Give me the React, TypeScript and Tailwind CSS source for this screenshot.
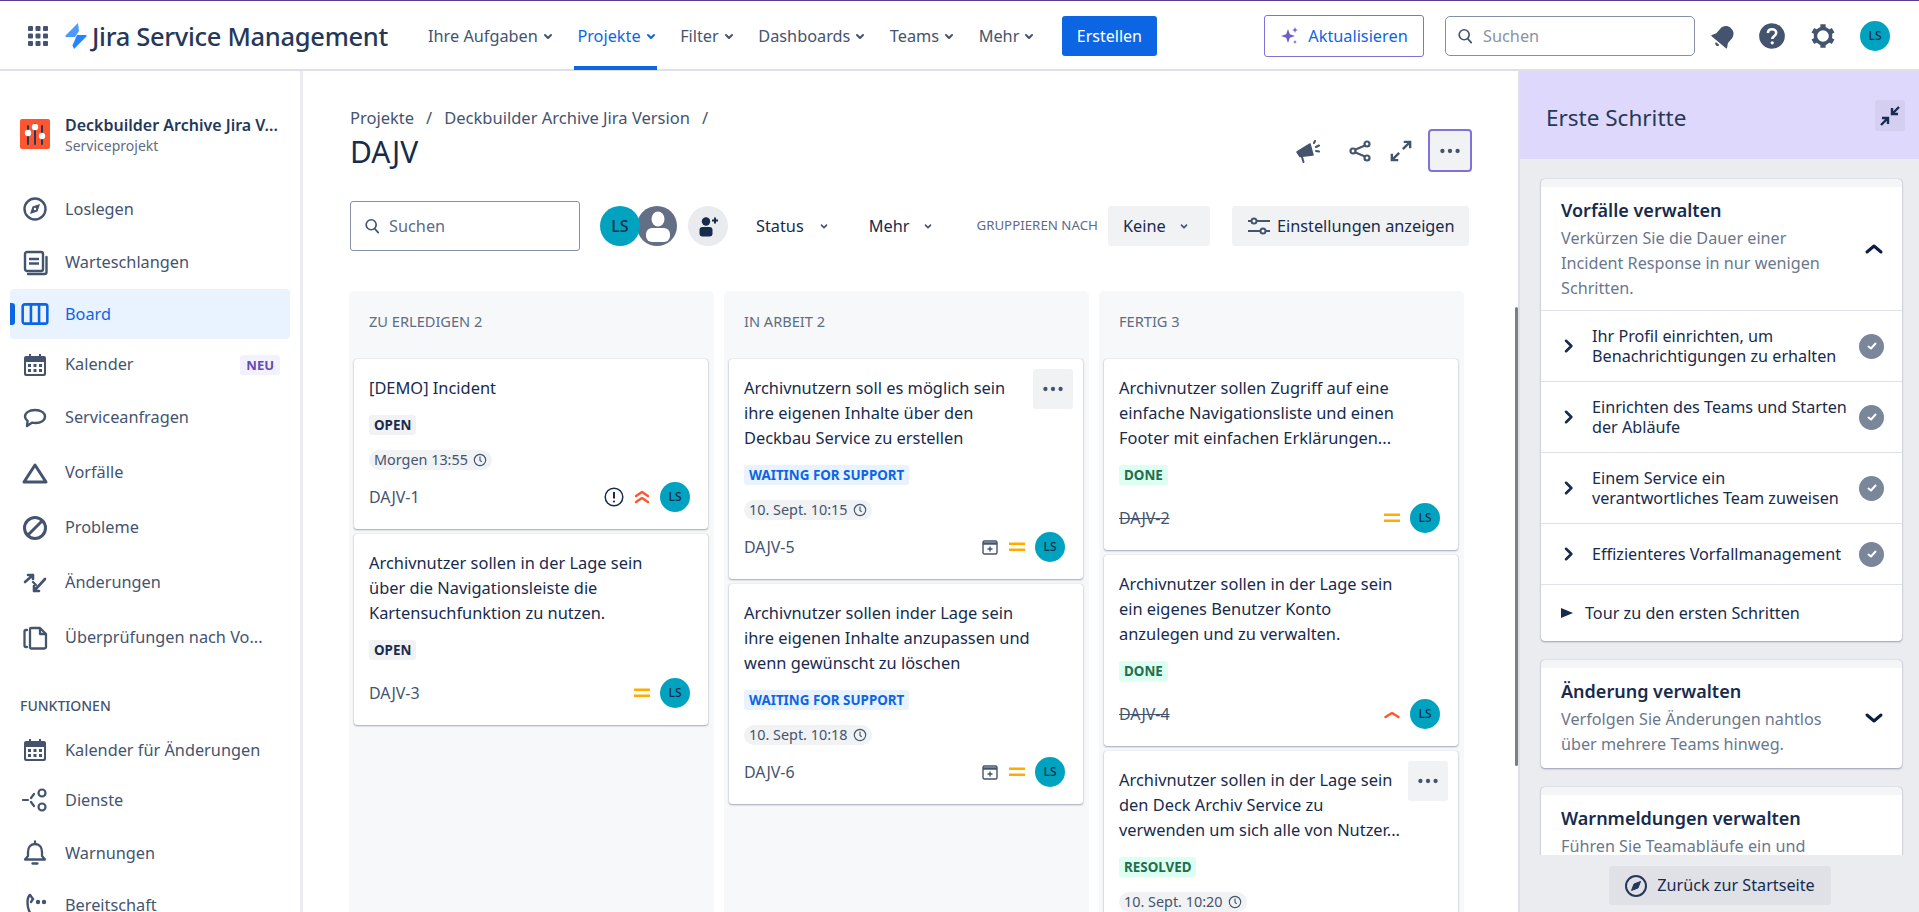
import type { ReactNode } from "react";

const FONT = "[font-family:'Noto_Sans','Open_Sans',sans-serif]";

type IconProps = { className?: string };

function ChevronDown({ className = "w-5 h-5" }: IconProps) {
  return (
    <svg viewBox="0 0 24 24" className={className} fill="currentColor">
      <path d="M8.292 10.293a1.009 1.009 0 000 1.419l2.939 2.965c.218.215.5.322.779.322s.556-.107.769-.322l2.93-2.955a1.01 1.01 0 000-1.419.987.987 0 00-1.406 0l-2.298 2.317-2.307-2.327a.99.99 0 00-1.406 0z" />
    </svg>
  );
}

function Dots({ className = "w-6 h-6" }: IconProps) {
  return (
    <svg viewBox="0 0 24 24" className={className} fill="currentColor">
      <circle cx="5" cy="12" r="2" />
      <circle cx="12" cy="12" r="2" />
      <circle cx="19" cy="12" r="2" />
    </svg>
  );
}

function SearchIcon({ className = "w-5 h-5" }: IconProps) {
  return (
    <svg viewBox="0 0 24 24" className={className} fill="none" stroke="currentColor" strokeWidth="2">
      <circle cx="11" cy="10.5" r="6" />
      <path d="M15.5 15.5l4 4.5" strokeLinecap="round" />
    </svg>
  );
}

function Calendar({ className = "w-7 h-7" }: IconProps) {
  return (
    <svg viewBox="0 0 28 28" className={className} fill="currentColor">
      <path d="M5 5h3V3h2v2h8V3h2v2h3a2 2 0 012 2v16a2 2 0 01-2 2H5a2 2 0 01-2-2V7a2 2 0 012-2zm0 6v11a1 1 0 001 1h16a1 1 0 001-1V11H5z" fillRule="evenodd" />
      <rect x="7" y="13" width="3" height="3" />
      <rect x="12.5" y="13" width="3" height="3" />
      <rect x="18" y="13" width="3" height="3" />
      <rect x="7" y="18" width="3" height="3" />
      <rect x="12.5" y="18" width="3" height="3" />
      <rect x="18" y="18" width="3" height="3" />
    </svg>
  );
}

const navIcons: Record<string, ReactNode> = {
  compass: (
    <svg viewBox="0 0 28 28" className="w-7 h-7" fill="none" stroke="currentColor" strokeWidth="2.4">
      <circle cx="14" cy="14" r="10.5" />
      <path d="M19 9l-2.5 7.5L9 19l2.500-7.500z" fill="currentColor" stroke="none" />
      <circle cx="14" cy="14" r="1.2" fill="white" stroke="none" />
    </svg>
  ),
  queues: (
    <svg viewBox="0 0 28 28" className="w-7 h-7" fill="none" stroke="currentColor" strokeWidth="2.4">
      <rect x="4" y="3" width="18" height="19" rx="2" />
      <path d="M8 10h10M8 14.500h10" />
      <path d="M25.500 8v15a2 2 0 01-2 2H7" strokeLinecap="round" />
    </svg>
  ),
  board: (
    <svg viewBox="0 0 28 28" className="w-[30px] h-[30px]" fill="none" stroke="currentColor" strokeWidth="2.4">
      <rect x="2.5" y="5" width="23" height="18" rx="2" />
      <path d="M10.2 5v18M17.8 5v18" />
    </svg>
  ),
  calendar: <Calendar />,
  chat: (
    <svg viewBox="0 0 28 28" className="w-7 h-7" fill="none" stroke="currentColor" strokeWidth="2.4" strokeLinejoin="round">
      <path d="M14 6c6 0 10 2.800 10 6.600 0 3.800-4 6.400-9.500 6.400-1.200 0-2.300-.1-3.300-.4L6 22l.6-5C4.900 15.800 4 14.300 4 12.600 4 8.800 8 6 14 6z" />
    </svg>
  ),
  triangle: (
    <svg viewBox="0 0 28 28" className="w-7 h-7" fill="none" stroke="currentColor" strokeWidth="3" strokeLinejoin="round">
      <path d="M14 6L25 23H3z" />
    </svg>
  ),
  ban: (
    <svg viewBox="0 0 28 28" className="w-7 h-7" fill="none" stroke="currentColor" strokeWidth="3">
      <circle cx="14" cy="14" r="10.5" />
      <path d="M7 21L21 7" />
    </svg>
  ),
  changes: (
    <svg viewBox="0 0 28 28" className="w-7 h-7" fill="none" stroke="currentColor" strokeWidth="2.6" strokeLinecap="round" strokeLinejoin="round">
      <path d="M4 13l8-7M12 6H7M12 6v4" />
      <path d="M24 10L13 22M13 22h5M13 22v-5" />
      <path d="M12 13l3 3" strokeWidth="2.2" />
    </svg>
  ),
  pages: (
    <svg viewBox="0 0 28 28" className="w-7 h-7" fill="none" stroke="currentColor" strokeWidth="2.3" strokeLinejoin="round">
      <path d="M10 4h9l6 6v13a1.500 1.500 0 01-1.500 1.500h-13A1.500 1.500 0 019 23V5a1 1 0 011-1z" />
      <path d="M19 4v6h6" />
      <path d="M6 6H5a1.500 1.500 0 00-1.500 1.500v14A1.500 1.500 0 005 23h1" strokeLinecap="round" />
    </svg>
  ),
  services: (
    <svg viewBox="0 0 28 28" className="w-7 h-7" fill="none" stroke="currentColor" strokeWidth="2.2" strokeLinecap="round">
      <circle cx="21" cy="7" r="3.5" />
      <circle cx="21" cy="21" r="3.5" />
      <path d="M2 14h5M10 12l3-4M10 16l3 4" />
    </svg>
  ),
  bell: (
    <svg viewBox="0 0 28 28" className="w-7 h-7" fill="none" stroke="currentColor" strokeWidth="2.3" strokeLinejoin="round" strokeLinecap="round">
      <path d="M14 5c4.500 0 7 3.500 7 8v4l3 3.500H4L7 17v-4c0-4.500 2.500-8 7-8z" />
      <path d="M14 2.500V5M11.500 24.500h5" />
    </svg>
  ),
  phone: (
    <svg viewBox="0 0 28 28" className="w-7 h-7" fill="none" stroke="currentColor" strokeWidth="2.4" strokeLinecap="round">
      <path d="M9 4C6 6 6 13 7.500 18c1 3.500 3 6 5.500 6" />
      <path d="M9 4l3 4-2 3" />
      <circle cx="17" cy="11" r="1" fill="currentColor" />
      <circle cx="23" cy="11" r="1" fill="currentColor" />
    </svg>
  ),
};

function Avatar() {
  return (
    <span className="flex h-[30px] w-[30px] shrink-0 items-center justify-center rounded-full bg-[#00a3bf] text-xs font-medium text-[#172b4d]">
      LS
    </span>
  );
}

function NavLink({ label, active = false }: { label: string; active?: boolean }) {
  return (
    <div className={`relative flex h-full items-center text-[16.3px] ${active ? "text-[#0c66e4]" : "text-[#44546f]"}`}>
      <span>{label}</span>
      <ChevronDown className="-ml-0.5 h-6 w-6" />
      {active && <div className="absolute bottom-[-1px] left-[-3px] right-[6px] h-[4px] bg-[#0c66e4]" />}
    </div>
  );
}

function TopBar() {
  return (
    <header className="flex h-[71px] shrink-0 items-center border-t border-t-[#5e3b8c] border-b-2 border-b-[#dfe1e6] bg-white pl-[28px] pr-[29px] pt-[2px]">
      <svg viewBox="0 0 20 20" className="h-5 w-5 text-[#44546f]" fill="currentColor">
        {[0, 7.5, 15].map((y) =>
          [0, 7.5, 15].map((x) => <rect key={`${x}-${y}`} x={x} y={y} width="5" height="5" rx="1" />),
        )}
      </svg>
      <svg viewBox="0 0 22 26" className="ml-[17px] h-[26px] w-[22px]">
        <path d="M13 0L.6 12.400c-.5.600-.2 1.600.7 1.600H10l4-6z" fill="#4c9aff" />
        <path d="M12 12h8.700c.9 0 1.200 1 .7 1.600L9 26l-1.500-3.500z" fill="#2684ff" />
      </svg>
      <span className="ml-[5px] whitespace-nowrap text-[25.5px] font-medium tracking-[-0.3px] text-[#253858]">Jira Service Management</span>
      <nav className="ml-[40px] flex h-full items-center gap-[17.5px]">
        <NavLink label="Ihre Aufgaben" />
        <NavLink label="Projekte" active />
        <NavLink label="Filter" />
        <NavLink label="Dashboards" />
        <NavLink label="Teams" />
        <NavLink label="Mehr" />
      </nav>
      <button className="ml-[20.5px] h-10 w-[95px] rounded-[3px] bg-[#0c66e4] text-base text-white">Erstellen</button>
      <button className="ml-auto flex h-[42px] w-[160px] items-center justify-center gap-2 rounded-[3px] border border-[#8270db] text-[16.3px] text-[#0c66e4]">
        <svg viewBox="0 0 20 20" className="h-5 w-5" fill="#6e5dc6">
          <path d="M8 3l1.800 5.200L15 10l-5.200 1.800L8 17l-1.800-5.200L1 10l5.200-1.800zM15 1l.8 2.200L18 4l-2.200.8L15 7l-.8-2.200L12 4l2.200-.8zM15 14l.6 1.400 1.400.6-1.400.6L15 18l-.6-1.400-1.400-.6 1.400-.6z" />
        </svg>
        Aktualisieren
      </button>
      <div className="ml-[21px] flex h-10 w-[250px] items-center rounded-[5px] border border-[#8590a2] pl-[9px]">
        <SearchIcon className="h-5 w-5 text-[#44546f]" />
        <span className="ml-[8px] text-[16.3px] text-[#8993a4]">Suchen</span>
      </div>
      <svg viewBox="0 0 24 24" className="ml-[15px] h-7 w-7 text-[#44546f]" fill="currentColor">
        <g transform="rotate(40 12 12)">
          <path d="M12 3c-3.800 0-6.500 2.800-6.500 6.500v5L3.500 18c-.3.500 0 1 .5 1h16c.5 0 .8-.5.5-1l-2-3.500v-5C18.500 5.800 15.800 3 12 3z" />
          <path d="M10 20.500a2 2 0 004 0z" />
        </g>
      </svg>
      <svg viewBox="0 0 24 24" className="ml-[20px] h-[28px] w-[28px] text-[#44546f]">
        <circle cx="12" cy="12" r="11" fill="currentColor" />
        <path d="M8.500 9.500C8.500 7.500 10 6.200 12 6.200s3.600 1.300 3.600 3.100c0 3-3.400 2.700-3.400 5.200" fill="none" stroke="white" strokeWidth="2.2" />
        <circle cx="12.200" cy="17.800" r="1.400" fill="white" />
      </svg>
      <svg viewBox="0 0 24 24" className="ml-[23px] h-7 w-7 text-[#44546f]" fill="none" stroke="currentColor" strokeWidth="3">
        <circle cx="12" cy="12" r="6.5" />
        <path d="M12 2v3.500M12 18.500V22M3.300 7l3 1.750M17.700 15.250l3 1.750M3.300 17l3-1.750M17.700 8.750l3-1.750" strokeWidth="4.500" />
      </svg>
      <div className="ml-[23px]"><Avatar /></div>
    </header>
  );
}

function SideItem({ icon, label, height, active = false, badge }: { icon: ReactNode; label: string; height: string; active?: boolean; badge?: string }) {
  return (
    <div className={`relative flex shrink-0 items-center rounded-[4px] pl-[10px] pr-[10px] ${height} ${active ? "bg-[#e9f2ff] text-[#0c66e4]" : "text-[#44546f]"}`}>
      {active && <div className="absolute left-0 top-[14px] h-[22px] w-[5px] rounded-r-[3px] bg-[#0c66e4]" />}
      <span className="flex w-[30px] justify-center">{icon}</span>
      <span className="ml-[15px] whitespace-nowrap text-[16.3px]">{label}</span>
      {badge && <span className="ml-auto rounded-[3px] bg-[#f3f0ff] px-[6px] text-[13px] font-bold leading-[20px] text-[#5e4db2]">{badge}</span>}
    </div>
  );
}

function Sidebar() {
  return (
    <aside className="flex h-full w-[303px] shrink-0 flex-col overflow-hidden border-r-[3px] border-r-[#ebecf0] bg-white pl-[10px] pr-[10px]">
      <div className="mt-[42px] flex shrink-0 items-center pl-[10px]">
        <svg viewBox="0 0 30 30" className="h-[30px] w-[30px] shrink-0">
          <rect width="30" height="30" rx="2" fill="#ff5630" />
          <path d="M8 7v18M15 5v20M22 7v18" stroke="#253858" strokeWidth="2" strokeLinecap="round" />
          <circle cx="8" cy="14" r="3.2" fill="white" />
          <circle cx="15" cy="8" r="3.2" fill="white" />
          <circle cx="22" cy="17" r="3.2" fill="white" />
        </svg>
        <div className="ml-[15px] flex min-w-0 flex-col">
          <span className="whitespace-nowrap text-base font-semibold leading-[24px] text-[#253858]">Deckbuilder Archive Jira V...</span>
          <span className="text-sm leading-[18px] text-[#5e6c84]">Serviceprojekt</span>
        </div>
      </div>
      <div className="mt-[27px] flex shrink-0 flex-col">
        <SideItem icon={navIcons.compass} label="Loslegen" height="h-[54px]" />
        <SideItem icon={navIcons.queues} label="Warteschlangen" height="h-[53px]" />
        <SideItem icon={navIcons.board} label="Board" height="h-[50px]" active />
        <SideItem icon={navIcons.calendar} label="Kalender" height="h-[51px]" badge="NEU" />
        <SideItem icon={navIcons.chat} label="Serviceanfragen" height="h-[55px]" />
        <SideItem icon={navIcons.triangle} label="Vorfälle" height="h-[55px]" />
        <SideItem icon={navIcons.ban} label="Probleme" height="h-[55px]" />
        <SideItem icon={navIcons.changes} label="Änderungen" height="h-[55px]" />
        <SideItem icon={navIcons.pages} label="Überprüfungen nach Vo..." height="h-[55px]" />
      </div>
      <div className="mt-[31px] shrink-0 pl-[10px] text-sm font-medium leading-[20px] text-[#44546f]">FUNKTIONEN</div>
      <div className="mt-[8px] flex shrink-0 flex-col">
        <SideItem icon={navIcons.calendar} label="Kalender für Änderungen" height="h-[52px]" />
        <SideItem icon={navIcons.services} label="Dienste" height="h-[48px]" />
        <SideItem icon={navIcons.bell} label="Warnungen" height="h-[58px]" />
        <SideItem icon={navIcons.phone} label="Bereitschaft" height="h-[46px]" />
      </div>
    </aside>
  );
}

const lozengeColors = {
  gray: "bg-[#f1f2f4] text-[#172b4d]",
  blue: "bg-[#e9f2ff] text-[#0c66e4]",
  green: "bg-[#dcfff1] text-[#216e4e]",
};

type Priority = "highest" | "medium" | "high";

function PriorityIcon({ level }: { level: Priority }) {
  if (level === "medium") {
    return (
      <svg viewBox="0 0 16 16" className="h-4 w-4" fill="#ffab00">
        <rect x="0" y="3.5" width="16" height="2.5" />
        <rect x="0" y="9.5" width="16" height="2.5" />
      </svg>
    );
  }
  return (
    <svg viewBox="0 0 16 16" className="h-4 w-4" fill="none" stroke="#ff5630" strokeWidth="2.4" strokeLinecap="round" strokeLinejoin="round">
      {level === "highest" && <path d="M2 7l6-4 6 4" />}
      <path d={level === "highest" ? "M2 13l6-4 6 4" : "M1.500 11l6.500-4 6.500 4"} />
    </svg>
  );
}

function ClockIcon() {
  return (
    <svg viewBox="0 0 16 16" className="h-[14px] w-[14px]" fill="none" stroke="#44546f" strokeWidth="1.3">
      <circle cx="8" cy="8" r="6.5" />
      <path d="M8 4v4.500l2 1.500" />
    </svg>
  );
}

type CardProps = {
  lines: string[];
  status: string;
  tone: keyof typeof lozengeColors;
  date?: string;
  id: string;
  done?: boolean;
  priority: Priority;
  extra?: "alert" | "add";
  more?: boolean;
};

function Card({ lines, status, tone, date, id, done = false, priority, extra, more = false }: CardProps) {
  return (
    <div className="relative shrink-0 rounded-[3px] bg-white px-[15px] pt-[16px] pb-[17px] shadow-[0_1px_2px_rgba(9,30,66,0.35),0_0_1px_rgba(9,30,66,0.3)]">
      {more && (
        <div className="absolute right-[10px] top-[10px] flex h-10 w-10 items-center justify-center rounded-[3px] bg-[#f1f2f4] text-[#44546f]">
          <Dots className="h-[26px] w-[26px]" />
        </div>
      )}
      <div className="text-[16.4px] leading-[25px] text-[#172b4d]">
        {lines.map((line) => (
          <div key={line} className="whitespace-nowrap">{line}</div>
        ))}
      </div>
      <div className="mt-[15px] flex">
        <span className={`rounded-[3px] px-[5px] text-[13.4px] font-bold leading-[20px] ${lozengeColors[tone]}`}>{status}</span>
      </div>
      {date && (
        <div className="mt-[15px] flex">
          <span className="flex h-5 items-center gap-[5px] rounded-full bg-[#f1f2f4] px-[5px] text-[14.4px] text-[#44546f]">
            {date}
            <ClockIcon />
          </span>
        </div>
      )}
      <div className={`flex h-[30px] items-center pr-[3px] ${date ? "mt-[12px]" : "mt-[18px]"}`}>
        <span className={`text-base text-[#44546f] ${done ? "line-through" : ""}`}>{id}</span>
        <div className="ml-auto flex items-center gap-[10px]">
          {extra === "alert" && (
            <svg viewBox="0 0 20 20" className="h-5 w-5" fill="none" stroke="#172b4d" strokeWidth="1.5">
              <circle cx="10" cy="10" r="8.8" />
              <path d="M10 5v6.500" strokeWidth="2" />
              <circle cx="10" cy="14.500" r="1.1" fill="#172b4d" stroke="none" />
            </svg>
          )}
          {extra === "add" && (
            <svg viewBox="0 0 16 16" className="mr-[1px] h-4 w-4" fill="none" stroke="#44546f" strokeWidth="1.4">
              <rect x="1" y="2" width="14" height="13" rx="1.5" />
              <path d="M1 4.500h14" strokeWidth="2.5" />
              <path d="M8 7.500v5M5.500 10h5" />
            </svg>
          )}
          <PriorityIcon level={priority} />
          <Avatar />
        </div>
      </div>
    </div>
  );
}

function Column({ title, children }: { title: string; children: ReactNode }) {
  return (
    <div className="flex h-[800px] w-[365px] shrink-0 flex-col overflow-hidden rounded-t-[5px] bg-[#f7f8f9] pl-[5px] pr-[6px]">
      <div className="flex h-[68px] shrink-0 items-center pl-[15px] pb-[7px] text-[14.6px] text-[#5e6c84]">{title}</div>
      <div className="flex flex-col gap-[5px]">{children}</div>
    </div>
  );
}

function MainArea() {
  return (
    <main className="relative flex h-full min-w-0 flex-1 flex-col overflow-hidden bg-white pl-[47px]">
      <div className="mt-[35px] flex h-[24px] shrink-0 items-center text-[16.5px] text-[#44546f]">
        <span>Projekte</span>
        <span className="mx-[12px]">/</span>
        <span>Deckbuilder Archive Jira Version</span>
        <span className="ml-[12px]">/</span>
      </div>
      <div className="flex h-[44px] shrink-0 items-center pr-[46px]">
        <h1 className="text-[30px] leading-[40px] text-[#172b4d]">DAJV</h1>
        <div className="ml-auto -mt-[3px] flex items-center text-[#44546f]">
          <svg viewBox="0 0 26 24" className="h-[24px] w-[26px]" fill="#44546f" stroke="#44546f" strokeLinecap="round">
            <path d="M2 13L15 5l3 11-13 1.500z" strokeWidth="1.5" strokeLinejoin="round" />
            <path d="M7 18l1.500 5M19 4l1-2M21 8l3-1.500M21 12l3 .5" strokeWidth="2" />
          </svg>
          <svg viewBox="0 0 24 24" className="ml-[27px] h-6 w-6" fill="none" stroke="#44546f" strokeWidth="2.2">
            <circle cx="19" cy="5" r="2.5" />
            <circle cx="5" cy="12" r="2.5" />
            <circle cx="19" cy="19" r="2.5" />
            <path d="M7.500 10.500l9.500-4M7.500 13.500l9.500 4" />
          </svg>
          <svg viewBox="0 0 24 24" className="ml-[18px] h-[22px] w-[22px]" fill="none" stroke="#44546f" strokeWidth="2.6">
            <path d="M14 10l8-8M15 2h7v7M10 14l-8 8M2 15v7h7" />
          </svg>
          <div className="ml-[16px] flex h-[43px] w-[44px] items-center justify-center rounded-[4px] border-2 border-[#8270db] bg-[#f1f2f4]">
            <Dots className="h-[26px] w-[26px]" />
          </div>
        </div>
      </div>
      <div className="mt-[27px] flex h-[50px] shrink-0 items-center text-[16.3px] text-[#172b4d]">
        <div className="flex h-[50px] w-[230px] shrink-0 items-center rounded-[3px] border border-[#8590a2] pl-[11px]">
          <SearchIcon className="h-5 w-5 text-[#44546f]" />
          <span className="ml-[7px] text-[#5e6c84]">Suchen</span>
        </div>
        <div className="ml-[20px] flex w-[77px] shrink-0">
          <span className="z-10 flex h-10 w-10 shrink-0 items-center justify-center rounded-full bg-[#00a3bf] text-base font-medium text-[#172b4d]">LS</span>
          <span className="-ml-[3px] flex h-10 w-10 shrink-0 items-center justify-center overflow-hidden rounded-full bg-[#626f86]">
            <svg viewBox="0 0 40 40" className="h-10 w-10" fill="white">
              <ellipse cx="21" cy="13" rx="6.5" ry="7.5" />
              <rect x="9" y="22" width="24" height="14" rx="6" />
            </svg>
          </span>
        </div>
        <span className="ml-[11px] flex h-10 w-10 shrink-0 items-center justify-center rounded-full bg-[#e9ebee]">
          <svg viewBox="0 0 24 24" className="h-6 w-6" fill="#172b4d">
            <circle cx="10" cy="7.5" r="4.2" />
            <rect x="3.500" y="13" width="13" height="9.500" rx="3" />
            <path d="M19 3.500v6M16 6.500h6" stroke="#172b4d" strokeWidth="2" />
          </svg>
        </span>
        <span className="ml-[28px]">Status</span>
        <ChevronDown className="ml-[10px] h-5 w-5 shrink-0 text-[#44546f]" />
        <span className="ml-[35px]">Mehr</span>
        <ChevronDown className="ml-[9px] h-5 w-5 shrink-0 text-[#44546f]" />
        <span className="ml-[38px] whitespace-nowrap text-[13.3px] text-[#5e6c84]">GRUPPIEREN NACH</span>
        <div className="ml-[10px] flex h-10 w-[102px] shrink-0 items-center rounded-[3px] bg-[#f1f2f4] pl-[15px]">
          Keine
          <ChevronDown className="ml-[8px] h-5 w-5 text-[#44546f]" />
        </div>
        <div className="ml-[22px] flex h-10 w-[237px] shrink-0 items-center rounded-[3px] bg-[#f1f2f4] pl-[14px]">
          <svg viewBox="0 0 24 24" className="h-6 w-6" fill="none" stroke="#44546f" strokeWidth="2">
            <path d="M2 7h22M2 17h22" />
            <circle cx="8" cy="7" r="2.5" fill="white" />
            <circle cx="17" cy="17" r="2.5" fill="white" />
          </svg>
          <span className="ml-[7px] whitespace-nowrap">Einstellungen anzeigen</span>
        </div>
      </div>
      <div className="mt-[40px] -ml-[1px] flex shrink-0 gap-[10px]">
        <Column title="ZU ERLEDIGEN 2">
          <Card lines={["[DEMO] Incident"]} status="OPEN" tone="gray" date="Morgen 13:55" id="DAJV-1" priority="highest" extra="alert" />
          <Card lines={["Archivnutzer sollen in der Lage sein", "über die Navigationsleiste die", "Kartensuchfunktion zu nutzen."]} status="OPEN" tone="gray" id="DAJV-3" priority="medium" />
        </Column>
        <Column title="IN ARBEIT 2">
          <Card lines={["Archivnutzern soll es möglich sein", "ihre eigenen Inhalte über den", "Deckbau Service zu erstellen"]} status="WAITING FOR SUPPORT" tone="blue" date="10. Sept. 10:15" id="DAJV-5" priority="medium" extra="add" more />
          <Card lines={["Archivnutzer sollen inder Lage sein", "ihre eigenen Inhalte anzupassen und", "wenn gewünscht zu löschen"]} status="WAITING FOR SUPPORT" tone="blue" date="10. Sept. 10:18" id="DAJV-6" priority="medium" extra="add" />
        </Column>
        <Column title="FERTIG 3">
          <Card lines={["Archivnutzer sollen Zugriff auf eine", "einfache Navigationsliste und einen", "Footer mit einfachen Erklärungen..."]} status="DONE" tone="green" id="DAJV-2" done priority="medium" />
          <Card lines={["Archivnutzer sollen in der Lage sein", "ein eigenes Benutzer Konto", "anzulegen und zu verwalten."]} status="DONE" tone="green" id="DAJV-4" done priority="high" />
          <Card lines={["Archivnutzer sollen in der Lage sein", "den Deck Archiv Service zu", "verwenden um sich alle von Nutzer..."]} status="RESOLVED" tone="green" date="10. Sept. 10:20" id="DAJV-7" done priority="medium" more />
        </Column>
      </div>
      <div className="absolute right-0 top-[236px] h-[459px] w-[3px] rounded-[2px] bg-[#7a7f87]" />
    </main>
  );
}

function ChecklistItem({ lines, height }: { lines: string[]; height: string }) {
  return (
    <div className={`flex items-center border-t border-t-[#dfe1e6] pr-[18px] ${height}`}>
      <svg viewBox="0 0 12 12" className="ml-[21px] h-[14px] w-[14px]" fill="none" stroke="#172b4d" strokeWidth="2.2" strokeLinecap="round" strokeLinejoin="round">
        <path d="M3.500 1.500L8 6l-4.500 4.500" />
      </svg>
      <div className="ml-[16px] text-[16.2px] leading-[20px] text-[#172b4d]">
        {lines.map((line) => (
          <div key={line} className="whitespace-nowrap">{line}</div>
        ))}
      </div>
      <span className="ml-auto flex h-[25px] w-[25px] items-center justify-center rounded-full bg-[#7a869a]">
        <svg viewBox="0 0 12 12" className="h-3 w-3" fill="none" stroke="white" strokeWidth="2" strokeLinecap="round" strokeLinejoin="round">
          <path d="M2.500 6.500l2.500 2 4.500-5" />
        </svg>
      </span>
    </div>
  );
}

function GuideCard({ title, desc, chevron, pb = "pb-[9px]", children }: { title: string; desc: string[]; chevron?: "up" | "down"; pb?: string; children?: ReactNode }) {
  return (
    <section className="shrink-0 overflow-hidden rounded-[4px] border-t-[8px] border-t-[#f4f5f7] bg-white shadow-[0_1px_2px_rgba(9,30,66,0.35),0_0_1px_rgba(9,30,66,0.3)]">
      <div className={`relative px-[20px] pt-[9px] ${pb}`}>
        <div className="text-lg font-semibold leading-[28px] text-[#172b4d]">{title}</div>
        <div className="mt-[2px] text-[16.2px] leading-[25px] text-[#6b778c]">
          {desc.map((line) => (
            <div key={line} className="whitespace-nowrap">{line}</div>
          ))}
        </div>
        {chevron && (
          <svg viewBox="0 0 24 24" className="absolute right-[16px] top-1/2 h-6 w-6 -translate-y-1/2" fill="none" stroke="#091e42" strokeWidth="3" strokeLinecap="round" strokeLinejoin="round">
            <path d={chevron === "up" ? "M5 15l7-6 7 6" : "M5 9l7 6 7-6"} />
          </svg>
        )}
      </div>
      {children}
    </section>
  );
}

function GuidePanel() {
  return (
    <aside className="flex h-full w-[401px] shrink-0 flex-col border-l-[2px] border-l-[#dfe1e6] bg-[#ebecf0]">
      <div className="flex h-[88px] shrink-0 items-center justify-between bg-[#dfd8fd] pl-[26px] pr-[14px]">
        <span className="mt-[6px] text-[22.5px] text-[#253858]">Erste Schritte</span>
        <span className="mt-[1px] flex h-[31px] w-[30px] items-center justify-center rounded-[3px] bg-[#d4cef0]">
          <svg viewBox="0 0 24 24" className="h-6 w-6" fill="none" stroke="#172b4d" strokeWidth="2.4">
            <path d="M21 3l-7 7M14 4v6h6M3 21l7-7M4 14h6v6" />
          </svg>
        </span>
      </div>
      <div className="flex min-h-0 flex-1 flex-col gap-[19px] overflow-hidden pl-[21px] pr-[17px] pt-[20px]">
        <GuideCard title="Vorfälle verwalten" desc={["Verkürzen Sie die Dauer einer", "Incident Response in nur wenigen", "Schritten."]} chevron="up">
          <ChecklistItem lines={["Ihr Profil einrichten, um", "Benachrichtigungen zu erhalten"]} height="h-[71px]" />
          <ChecklistItem lines={["Einrichten des Teams und Starten", "der Abläufe"]} height="h-[71px]" />
          <ChecklistItem lines={["Einem Service ein", "verantwortliches Team zuweisen"]} height="h-[71px]" />
          <ChecklistItem lines={["Effizienteres Vorfallmanagement"]} height="h-[61px]" />
          <div className="flex h-[57px] items-center border-t border-t-[#dfe1e6] pl-[20px]">
            <svg viewBox="0 0 12 12" className="h-3 w-3" fill="#172b4d">
              <path d="M0 1l12 5-12 5z" />
            </svg>
            <span className="ml-[12px] text-[16.2px] text-[#172b4d]">Tour zu den ersten Schritten</span>
          </div>
        </GuideCard>
        <GuideCard title="Änderung verwalten" desc={["Verfolgen Sie Änderungen nahtlos", "über mehrere Teams hinweg."]} chevron="down" pb="pb-[11px]" />
        <GuideCard title="Warnmeldungen verwalten" desc={["Führen Sie Teamabläufe ein und"]} />
      </div>
      <div className="flex h-[57px] shrink-0 items-start justify-center bg-[#ebecf0] pt-[11px]">
        <div className="flex h-[39px] w-[222px] items-center justify-center gap-[9px] rounded-[3px] bg-[#dfe1e6] text-[16.2px] text-[#172b4d]">
          <svg viewBox="0 0 24 24" className="h-[24px] w-[24px]" fill="none" stroke="#253858" strokeWidth="2">
            <circle cx="12" cy="12" r="10" />
            <path d="M16.500 7.500l-2.500 6.500-6.500 2.500 2.500-6.500z" fill="#253858" strokeWidth="1" />
          </svg>
          Zurück zur Startseite
        </div>
      </div>
    </aside>
  );
}

export default function App() {
  return (
    <div className={`flex h-[912px] w-[1919px] flex-col overflow-hidden bg-white ${FONT}`}>
      <TopBar />
      <div className="flex min-h-0 flex-1">
        <Sidebar />
        <MainArea />
        <GuidePanel />
      </div>
    </div>
  );
}
